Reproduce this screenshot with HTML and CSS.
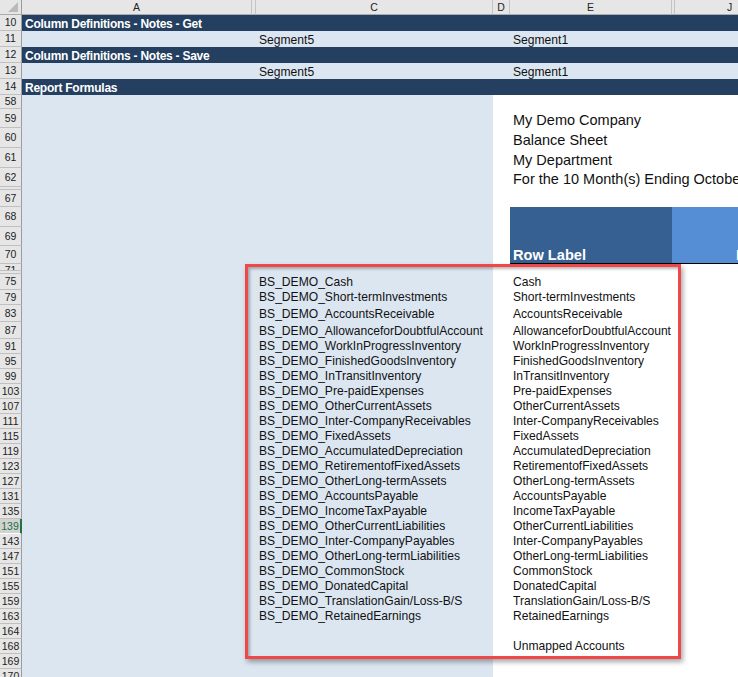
FILE: index.html
```html
<!DOCTYPE html>
<html>
<head>
<meta charset="utf-8">
<link rel="stylesheet" href="styles.css">
</head>
<body>
<div class="sheet">
  <div class="row colhead h15">
    <div class="hc corner"><span class="tri"></span></div>
    <div class="hc">A</div>
    <div class="hc"></div>
    <div class="hc">C</div>
    <div class="hc">D</div>
    <div class="hc">E</div>
    <div class="hc"></div>
    <div class="hc">J</div>
  </div>

  <div class="row dark h16"><div class="rh">10</div><div class="c">Column Definitions - Notes - Get</div><div class="c"></div><div class="c"></div><div class="c"></div><div class="c"></div><div class="c"></div><div class="c"></div></div>
  <div class="row light h16"><div class="rh">11</div><div class="c"></div><div class="c"></div><div class="c">Segment5</div><div class="c"></div><div class="c">Segment1</div><div class="c"></div><div class="c"></div></div>
  <div class="row dark h16"><div class="rh">12</div><div class="c">Column Definitions - Notes - Save</div><div class="c"></div><div class="c"></div><div class="c"></div><div class="c"></div><div class="c"></div><div class="c"></div></div>
  <div class="row light h16"><div class="rh">13</div><div class="c"></div><div class="c"></div><div class="c">Segment5</div><div class="c"></div><div class="c">Segment1</div><div class="c"></div><div class="c"></div></div>
  <div class="row dark h16"><div class="rh">14</div><div class="c">Report Formulas</div><div class="c"></div><div class="c"></div><div class="c"></div><div class="c"></div><div class="c"></div><div class="c"></div></div>

  <div class="row data h14"><div class="rh top">58</div><div class="c"></div><div class="c"></div><div class="c"></div><div class="c"></div><div class="c"></div><div class="c"></div><div class="c"></div></div>
  <div class="row data h19"><div class="rh">59</div><div class="c"></div><div class="c"></div><div class="c"></div><div class="c"></div><div class="c title">My Demo Company</div></div>
  <div class="row data h20"><div class="rh">60</div><div class="c"></div><div class="c"></div><div class="c"></div><div class="c"></div><div class="c title">Balance Sheet</div></div>
  <div class="row data h20"><div class="rh">61</div><div class="c"></div><div class="c"></div><div class="c"></div><div class="c"></div><div class="c title">My Department</div></div>
  <div class="row data h19"><div class="rh">62</div><div class="c"></div><div class="c"></div><div class="c"></div><div class="c"></div><div class="c title">For the 10 Month(s) Ending October 31, 2018</div></div>
  <div class="row data h3"><div class="rh"></div><div class="c"></div><div class="c"></div><div class="c"></div><div class="c"></div><div class="c"></div><div class="c"></div><div class="c"></div></div>
  <div class="row data h17"><div class="rh">67</div><div class="c"></div><div class="c"></div><div class="c"></div><div class="c"></div><div class="c"></div><div class="c"></div><div class="c"></div></div>
  <div class="row data hdr h20"><div class="rh">68</div><div class="c"></div><div class="c"></div><div class="c"></div><div class="c"></div><div class="c"></div><div class="c"></div><div class="c"></div></div>
  <div class="row data hdr h19"><div class="rh">69</div><div class="c"></div><div class="c"></div><div class="c"></div><div class="c"></div><div class="c"></div><div class="c"></div><div class="c"></div></div>
  <div class="row data hdr last h18"><div class="rh">70</div><div class="c"></div><div class="c"></div><div class="c"></div><div class="c"></div><div class="c rl">Row Label</div><div class="c"></div><div class="c rl jtext">B</div></div>
  <div class="row data h7"><div class="rh clip">71</div><div class="c"></div><div class="c"></div><div class="c"></div><div class="c"></div><div class="c"></div><div class="c"></div><div class="c"></div></div>
  <div class="row data h3"><div class="rh"></div><div class="c"></div><div class="c"></div><div class="c"></div><div class="c"></div><div class="c"></div><div class="c"></div><div class="c"></div></div>

  <div class="row data h16"><div class="rh">75</div><div class="c"></div><div class="c"></div><div class="c">BS_DEMO_Cash</div><div class="c"></div><div class="c">Cash</div><div class="c"></div><div class="c"></div></div>
  <div class="row data h15"><div class="rh">79</div><div class="c"></div><div class="c"></div><div class="c">BS_DEMO_Short-termInvestments</div><div class="c"></div><div class="c">Short-termInvestments</div><div class="c"></div><div class="c"></div></div>
  <div class="row data h17"><div class="rh">83</div><div class="c"></div><div class="c"></div><div class="c">BS_DEMO_AccountsReceivable</div><div class="c"></div><div class="c">AccountsReceivable</div><div class="c"></div><div class="c"></div></div>
  <div class="row data h17"><div class="rh">87</div><div class="c"></div><div class="c"></div><div class="c">BS_DEMO_AllowanceforDoubtfulAccount</div><div class="c"></div><div class="c">AllowanceforDoubtfulAccount</div><div class="c"></div><div class="c"></div></div>
  <div class="row data h15"><div class="rh">91</div><div class="c"></div><div class="c"></div><div class="c">BS_DEMO_WorkInProgressInventory</div><div class="c"></div><div class="c">WorkInProgressInventory</div><div class="c"></div><div class="c"></div></div>
  <div class="row data h15"><div class="rh">95</div><div class="c"></div><div class="c"></div><div class="c">BS_DEMO_FinishedGoodsInventory</div><div class="c"></div><div class="c">FinishedGoodsInventory</div><div class="c"></div><div class="c"></div></div>
  <div class="row data h15"><div class="rh">99</div><div class="c"></div><div class="c"></div><div class="c">BS_DEMO_InTransitInventory</div><div class="c"></div><div class="c">InTransitInventory</div><div class="c"></div><div class="c"></div></div>
  <div class="row data h15"><div class="rh">103</div><div class="c"></div><div class="c"></div><div class="c">BS_DEMO_Pre-paidExpenses</div><div class="c"></div><div class="c">Pre-paidExpenses</div><div class="c"></div><div class="c"></div></div>
  <div class="row data h15"><div class="rh">107</div><div class="c"></div><div class="c"></div><div class="c">BS_DEMO_OtherCurrentAssets</div><div class="c"></div><div class="c">OtherCurrentAssets</div><div class="c"></div><div class="c"></div></div>
  <div class="row data h15"><div class="rh">111</div><div class="c"></div><div class="c"></div><div class="c">BS_DEMO_Inter-CompanyReceivables</div><div class="c"></div><div class="c">Inter-CompanyReceivables</div><div class="c"></div><div class="c"></div></div>
  <div class="row data h15"><div class="rh">115</div><div class="c"></div><div class="c"></div><div class="c">BS_DEMO_FixedAssets</div><div class="c"></div><div class="c">FixedAssets</div><div class="c"></div><div class="c"></div></div>
  <div class="row data h15"><div class="rh">119</div><div class="c"></div><div class="c"></div><div class="c">BS_DEMO_AccumulatedDepreciation</div><div class="c"></div><div class="c">AccumulatedDepreciation</div><div class="c"></div><div class="c"></div></div>
  <div class="row data h15"><div class="rh">123</div><div class="c"></div><div class="c"></div><div class="c">BS_DEMO_RetirementofFixedAssets</div><div class="c"></div><div class="c">RetirementofFixedAssets</div><div class="c"></div><div class="c"></div></div>
  <div class="row data h15"><div class="rh">127</div><div class="c"></div><div class="c"></div><div class="c">BS_DEMO_OtherLong-termAssets</div><div class="c"></div><div class="c">OtherLong-termAssets</div><div class="c"></div><div class="c"></div></div>
  <div class="row data h15"><div class="rh">131</div><div class="c"></div><div class="c"></div><div class="c">BS_DEMO_AccountsPayable</div><div class="c"></div><div class="c">AccountsPayable</div><div class="c"></div><div class="c"></div></div>
  <div class="row data h15"><div class="rh">135</div><div class="c"></div><div class="c"></div><div class="c">BS_DEMO_IncomeTaxPayable</div><div class="c"></div><div class="c">IncomeTaxPayable</div><div class="c"></div><div class="c"></div></div>
  <div class="row data h15"><div class="rh sel">139</div><div class="c"></div><div class="c"></div><div class="c">BS_DEMO_OtherCurrentLiabilities</div><div class="c"></div><div class="c">OtherCurrentLiabilities</div><div class="c"></div><div class="c"></div></div>
  <div class="row data h15"><div class="rh">143</div><div class="c"></div><div class="c"></div><div class="c">BS_DEMO_Inter-CompanyPayables</div><div class="c"></div><div class="c">Inter-CompanyPayables</div><div class="c"></div><div class="c"></div></div>
  <div class="row data h15"><div class="rh">147</div><div class="c"></div><div class="c"></div><div class="c">BS_DEMO_OtherLong-termLiabilities</div><div class="c"></div><div class="c">OtherLong-termLiabilities</div><div class="c"></div><div class="c"></div></div>
  <div class="row data h15"><div class="rh">151</div><div class="c"></div><div class="c"></div><div class="c">BS_DEMO_CommonStock</div><div class="c"></div><div class="c">CommonStock</div><div class="c"></div><div class="c"></div></div>
  <div class="row data h15"><div class="rh">155</div><div class="c"></div><div class="c"></div><div class="c">BS_DEMO_DonatedCapital</div><div class="c"></div><div class="c">DonatedCapital</div><div class="c"></div><div class="c"></div></div>
  <div class="row data h15"><div class="rh">159</div><div class="c"></div><div class="c"></div><div class="c">BS_DEMO_TranslationGain/Loss-B/S</div><div class="c"></div><div class="c">TranslationGain/Loss-B/S</div><div class="c"></div><div class="c"></div></div>
  <div class="row data h15"><div class="rh">163</div><div class="c"></div><div class="c"></div><div class="c">BS_DEMO_RetainedEarnings</div><div class="c"></div><div class="c">RetainedEarnings</div><div class="c"></div><div class="c"></div></div>
  <div class="row data h15"><div class="rh">164</div><div class="c"></div><div class="c"></div><div class="c"></div><div class="c"></div><div class="c"></div><div class="c"></div><div class="c"></div></div>
  <div class="row data h15"><div class="rh">168</div><div class="c"></div><div class="c"></div><div class="c"></div><div class="c"></div><div class="c">Unmapped Accounts</div><div class="c"></div><div class="c"></div></div>
  <div class="row data h15"><div class="rh">169</div><div class="c"></div><div class="c"></div><div class="c"></div><div class="c"></div><div class="c"></div><div class="c"></div><div class="c"></div></div>
  <div class="row data h15"><div class="rh">170</div><div class="c"></div><div class="c"></div><div class="c"></div><div class="c"></div><div class="c"></div><div class="c"></div><div class="c"></div></div>
</div>
<div class="callout"></div>
</body>
</html>
```

FILE: styles.css
```css
* { box-sizing: border-box; }
html, body { margin: 0; padding: 0; overflow: hidden; background: #ffffff; }
body {
  width: 738px;
  height: 677px;
  position: relative;
  font-family: "Liberation Sans", Arial, sans-serif;
  color: #111;
}
.sheet { width: 785px; }
.row {
  display: grid;
  grid-template-columns: 22px 230px 4px 237px 17px 162px 3px 110px;
}
.h3 { height: 3px; }
.h7 { height: 7px; }
.h14 { height: 14px; }
.h15 { height: 15px; }
.h16 { height: 16px; }
.h17 { height: 17px; }
.h18 { height: 18px; }
.h19 { height: 19px; }
.h20 { height: 20px; }

/* column header */
.hc {
  background: #e6e6e6;
  border-right: 1px solid #c4c4c4;
  border-bottom: 1px solid #ababab;
  font-size: 10.5px;
  line-height: 1;
  color: #222;
  display: flex;
  align-items: center;
  justify-content: center;
  overflow: hidden;
}
.hc:first-child { border-right-color: #9c9c9c; }
.corner { justify-content: flex-end; align-items: flex-end; padding: 0 3px 2px 0; }
.tri {
  width: 0; height: 0;
  border-left: 10px solid transparent;
  border-bottom: 10px solid #b9b9b9;
}

/* row header */
.rh {
  background: #e6e6e6;
  border-right: 1px solid #9c9c9c;
  border-bottom: 1px solid #c0c0c0;
  font-size: 10.5px;
  line-height: 1;
  color: #222;
  display: flex;
  align-items: center;
  justify-content: center;
  overflow: hidden;
}
.rh.top { align-items: flex-start; padding-top: 1px; }
.rh.clip { align-items: flex-start; padding-top: 1px; }
.rh.sel {
  background: #d2d2d2;
  color: #217346;
  border-right: 2px solid #217346;
  border-bottom-color: #ffffff;
}

/* cells */
.c {
  display: flex;
  align-items: flex-end;
  padding: 0 3px 1px 3px;
  font-size: 12.1px;
  line-height: 14px;
  white-space: nowrap;
  overflow: hidden;
  background: #ffffff;
}
.dark > .c {
  background: #243f60;
  color: #ffffff;
  font-weight: bold;
  font-size: 12px;
  letter-spacing: -0.25px;
  padding-bottom: 0;
}
.light > .c { background: #dce6f1; padding-bottom: 0; }
.data > .c:nth-child(2),
.data > .c:nth-child(3),
.data > .c:nth-child(4) { background: #dce6f1; }

.c.title {
  grid-column: span 3;
  font-size: 14.5px;
  line-height: 16px;
  padding-bottom: 0;
}
.hdr > .c:nth-child(6) { background: #366092; }
.hdr > .c:nth-child(7),
.hdr > .c:nth-child(8) { background: #558ed5; }
.last > .c:nth-child(6),
.last > .c:nth-child(7),
.last > .c:nth-child(8) { border-bottom: 1px solid #000; }
.c.rl {
  color: #ffffff;
  font-weight: bold;
  font-size: 14.6px;
  line-height: 15px;
  padding-bottom: 0;
}
.c.jtext { padding-left: 61px; }

/* annotation box */
.callout {
  position: absolute;
  left: 245px;
  top: 264px;
  width: 436px;
  height: 395px;
  border: 3px solid #f04848;
  box-shadow: 2px 3px 5px rgba(0, 0, 0, 0.35), inset 2px 2px 3px rgba(0, 0, 0, 0.28);
}
```
